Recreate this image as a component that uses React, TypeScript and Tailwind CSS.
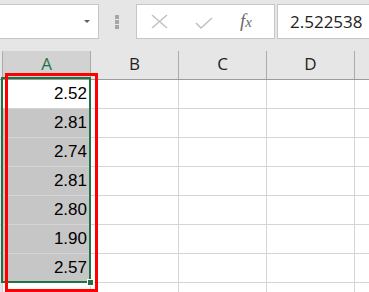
const values = ["2.52", "2.81", "2.74", "2.81", "2.80", "1.90", "2.57"];
const cols = ["B", "C", "D"];

function FormulaBar() {
  return (
    <div className="h-[51px] bg-[#e6e6e6] flex items-start pt-[4px] shrink-0">
      <div className="ml-[-1px] w-[100px] h-[35px] bg-white border border-[#c6c6c6] flex items-center justify-end pr-[8px]">
        <div className="w-0 h-0 border-l-[3px] border-r-[3px] border-t-[3px] border-l-transparent border-r-transparent border-t-[#5f5f5f]" />
      </div>
      <div className="ml-[16px] mt-[11px] flex flex-col gap-[1px]">
        <div className="w-[4px] h-[4px] bg-[#a6a6a6]" />
        <div className="w-[4px] h-[4px] bg-[#a6a6a6]" />
        <div className="w-[4px] h-[4px] bg-[#a6a6a6]" />
      </div>
      <div className="ml-[17px] w-[139px] h-[35px] bg-white border border-[#c6c6c6] relative">
        <svg className="absolute left-[14px] top-[9px]" width="17" height="15" viewBox="0 0 17 15">
          <path d="M1 1 L16 14 M16 1 L1 14" stroke="#c3c3c3" strokeWidth="1.6" fill="none" />
        </svg>
        <svg className="absolute left-[58px] top-[12px]" width="18" height="12" viewBox="0 0 18 12">
          <path d="M1 6 L6 11 L17 1" stroke="#c3c3c3" strokeWidth="1.6" fill="none" />
        </svg>
        <span className="absolute left-[103px] top-[3px] text-[19px] italic text-[#6b6b6b] font-['Liberation_Serif',serif] leading-[26px]">
          f<span className="text-[15px]">x</span>
        </span>
      </div>
      <div className="ml-[2px] flex-1 h-[35px] bg-white border border-[#c6c6c6] border-r-0 pl-[12px] flex items-center">
        <span className="text-[17px] text-[#222] font-['Open_Sans',sans-serif] leading-none">2.522538</span>
      </div>
    </div>
  );
}

function HeaderRow() {
  return (
    <div className="h-[29px] flex bg-[#e6e6e6] border-b border-[#9b9b9b] shrink-0">
      <div className="w-[3px] border-r border-[#ababab]" />
      <div className="w-[88px] bg-[#d2d2d2] border-r border-[#ababab] flex items-center justify-center text-[17px] text-[#217346] font-['Open_Sans',sans-serif] pb-[3px]">
        A
      </div>
      {cols.map((c) => (
        <div
          key={c}
          className="w-[88px] border-r border-[#ababab] flex items-center justify-center text-[17px] text-[#222] font-['Open_Sans',sans-serif] pb-[3px]"
        >
          {c}
        </div>
      ))}
      <div className="flex-1" />
    </div>
  );
}

function Row({ value, index }: { value?: string; index: number }) {
  const active = index === 0;
  const selected = value !== undefined;
  return (
    <div className="h-[29px] flex border-b border-[#d4d4d4] shrink-0">
      <div className="w-[3px] bg-[#e6e6e6] border-r border-[#d4d4d4]" />
      <div
        className={
          "w-[88px] border-r border-[#d4d4d4] flex items-center justify-end pr-[3px] text-[17px] leading-[28px] text-black font-['Liberation_Sans',Arial,sans-serif] " +
          (selected && !active ? "bg-[#c6c6c6]" : "bg-white")
        }
      >
        {value}
      </div>
      {cols.map((c) => (
        <div key={c} className="w-[88px] border-r border-[#d4d4d4]" />
      ))}
      <div className="flex-1" />
    </div>
  );
}

export default function App() {
  return (
    <div className="w-[369px] h-[292px] overflow-hidden bg-white relative flex flex-col">
      <FormulaBar />
      <HeaderRow />
      {values.map((v, i) => (
        <Row key={i} value={v} index={i} />
      ))}
      <Row index={7} />

      {/* selection border */}
      <div className="absolute left-[1px] top-[77px] w-[90px] h-[206px] border-2 border-[#217346]" />
      <div className="absolute left-[87px] top-[279px] w-[7px] h-[7px] bg-[#217346] border border-white" />

      {/* red annotation */}
      <div className="absolute left-[5px] top-[73px] w-[93px] h-[219px] border-[3px] border-[#ff0000]" />
    </div>
  );
}
